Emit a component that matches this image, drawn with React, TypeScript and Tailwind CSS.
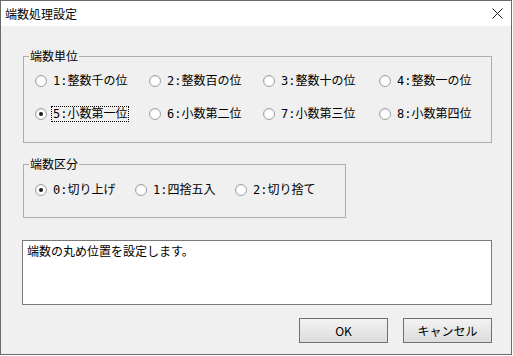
import React, { useState } from "react";

const font = { fontFamily: '"Noto Sans CJK JP", "Noto Sans", sans-serif' };
const labelFont = { fontFamily: '"DejaVu Sans Mono", "Noto Sans CJK JP", monospace' };

const Radio = ({ label, checked, focused, onClick }: { label: string; checked?: boolean; focused?: boolean; onClick?: () => void }) => (
  <div className="flex items-center gap-[5px] h-[14px] cursor-default" onClick={onClick}>
    <span className="w-[12px] h-[12px] rounded-full border border-[#a3a3a3] bg-gradient-to-br from-[#e4e4e4] to-white flex items-center justify-center shrink-0">
      <span className="w-[8px] h-[8px] rounded-full bg-white flex items-center justify-center">
        {checked && <span className="w-[4px] h-[4px] rounded-full bg-[#1a1a1a]" />}
      </span>
    </span>
    <span
      className={"text-[12px] leading-[14px] text-black whitespace-nowrap px-px " + (focused ? "outline outline-1 outline-dotted outline-black" : "")}
      style={labelFont}
    >
      {label}
    </span>
  </div>
);

const App = () => {
  const [unit, setUnit] = useState(5);
  const [kind, setKind] = useState(0);

  const units = [
    "1:整数千の位", "2:整数百の位", "3:整数十の位", "4:整数一の位",
    "5:小数第一位", "6:小数第二位", "7:小数第三位", "8:小数第四位",
  ];
  const kinds = ["0:切り上げ", "1:四捨五入", "2:切り捨て"];

  return (
    <div className="w-[513px] h-[356px] bg-white" style={font}>
      <div className="w-[512px] h-[355px] border border-[#6b6b6b] flex flex-col">
        <div className="h-[25px] bg-white flex items-center justify-between pl-[4px] pr-[8px]">
          <span className="text-[12px] text-black">端数処理設定</span>
          <svg width="11" height="11" viewBox="0 0 11 11">
            <path d="M0.5 0.5 L10.5 10.5 M10.5 0.5 L0.5 10.5" stroke="#1a1a1a" strokeWidth="1" />
          </svg>
        </div>

        <div className="flex-1 bg-[#f0f0f0] pl-[21px] pt-[30px]">
          <div className="relative ml-px w-[469px] h-[87px] border border-[#adadad]">
            <span className="absolute left-[5px] top-[-8px] bg-[#f0f0f0] px-px text-[12px] leading-[14px]">端数単位</span>
            <div className="grid grid-cols-[114px_114px_116px_114px] gap-y-[19px] pt-[17px] pl-[11px]">
              {units.map((u, i) => (
                <Radio key={u} label={u} checked={unit === i + 1} focused={i === 4} onClick={() => setUnit(i + 1)} />
              ))}
            </div>
          </div>

          <div className="relative ml-px mt-[21px] w-[323px] h-[54px] border border-[#adadad]">
            <span className="absolute left-[5px] top-[-8px] bg-[#f0f0f0] px-px text-[12px] leading-[14px]">端数区分</span>
            <div className="flex pt-[18px] pl-[11px]">
              {kinds.map((k, i) => (
                <div key={k} className="w-[100px]">
                  <Radio label={k} checked={kind === i} onClick={() => setKind(i)} />
                </div>
              ))}
            </div>
          </div>

          <div className="mt-[22px] w-[470px] h-[65px] border border-[#7a7a7a] bg-white pl-[4px] pt-[3px] text-[12px] leading-[14px]">
            端数の丸め位置を設定します。
          </div>

          <div className="mt-[13px] w-[470px] flex justify-end gap-[15px]">
            <button className="w-[89px] h-[25px] border border-[#707070] bg-gradient-to-b from-[#f3f3f3] to-[#dcdcdc] text-[12px] text-black">OK</button>
            <button className="w-[89px] h-[25px] border border-[#707070] bg-gradient-to-b from-[#f3f3f3] to-[#dcdcdc] text-[12px] text-black">キャンセル</button>
          </div>
        </div>
      </div>
    </div>
  );
};

export default App;
